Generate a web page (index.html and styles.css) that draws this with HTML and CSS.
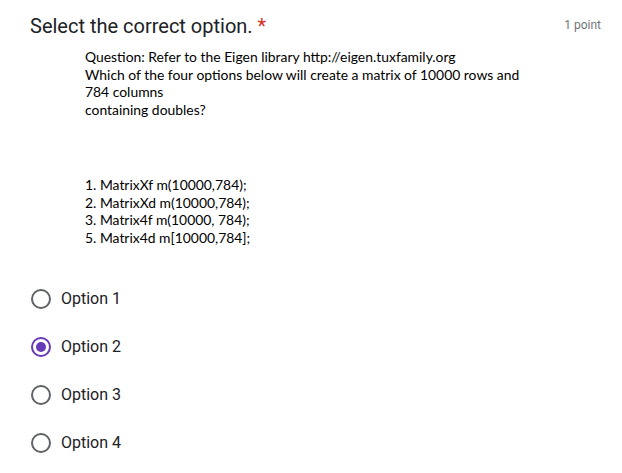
FILE: index.html
```html
<!DOCTYPE html>
<html>
<head>
<meta charset="utf-8">
<link rel="stylesheet" href="styles.css">
</head>
<body>
<div class="card">
  <div class="header">
    <div class="title">Select the correct option. <span class="req">*</span></div>
    <div class="points">1 point</div>
  </div>
  <div class="question">
    <div class="qline">Question: Refer to the Eigen library http://eigen.tuxfamily.org</div>
    <div class="qline">Which of the four options below will create a matrix of 10000 rows and</div>
    <div class="qline">784 columns</div>
    <div class="qline">containing doubles?</div>
    <div class="qline blank"></div>
    <div class="qline blank"></div>
    <div class="qline blank"></div>
    <div class="list">
      <div class="qline">1. MatrixXf m(10000,784);</div>
      <div class="qline">2. MatrixXd m(10000,784);</div>
      <div class="qline">3. Matrix4f m(10000, 784);</div>
      <div class="qline">5. Matrix4d m[10000,784];</div>
    </div>
  </div>
  <div class="options">
    <div class="option"><span class="radio"></span><span class="label">Option 1</span></div>
    <div class="option"><span class="radio checked"></span><span class="label">Option 2</span></div>
    <div class="option"><span class="radio"></span><span class="label">Option 3</span></div>
    <div class="option"><span class="radio"></span><span class="label">Option 4</span></div>
  </div>
</div>
</body>
</html>
```
FILE: styles.css
```css
html, body {
  margin: 0;
  padding: 0;
  background: #ffffff;
}
.card {
  padding: 13px 21px 0 30px;
  font-family: Roboto, "Liberation Sans", sans-serif;
  color: #202124;
}
.header {
  display: flex;
  justify-content: space-between;
  align-items: flex-start;
}
.title {
  font-size: 20px;
  line-height: 26px;
  color: #202124;
}
.req {
  color: #d93025;
}
.points {
  font-size: 12px;
  line-height: 16px;
  color: #70757a;
  padding-top: 4px;
}
.question {
  margin-left: 55px;
  margin-top: 9px;
  font-family: Lato, "Open Sans", sans-serif;
  font-size: 13.9px;
  color: #000000;
}
.qline {
  height: 17.6px;
  line-height: 17.6px;
  white-space: nowrap;
}
.list {
  margin-top: 5px;
}
.options {
  margin-top: 28px;
}
.option {
  display: flex;
  align-items: center;
  height: 48px;
}
.radio {
  width: 16px;
  height: 16px;
  border: 2px solid #5f6368;
  border-radius: 50%;
  margin-left: 1px;
  margin-right: 10px;
  position: relative;
  flex: none;
}
.radio.checked {
  border-color: #673ab7;
}
.radio.checked::after {
  content: "";
  position: absolute;
  left: 3px;
  top: 3px;
  width: 10px;
  height: 10px;
  border-radius: 50%;
  background: #673ab7;
}
.label {
  font-size: 16px;
  color: #202124;
}
```
